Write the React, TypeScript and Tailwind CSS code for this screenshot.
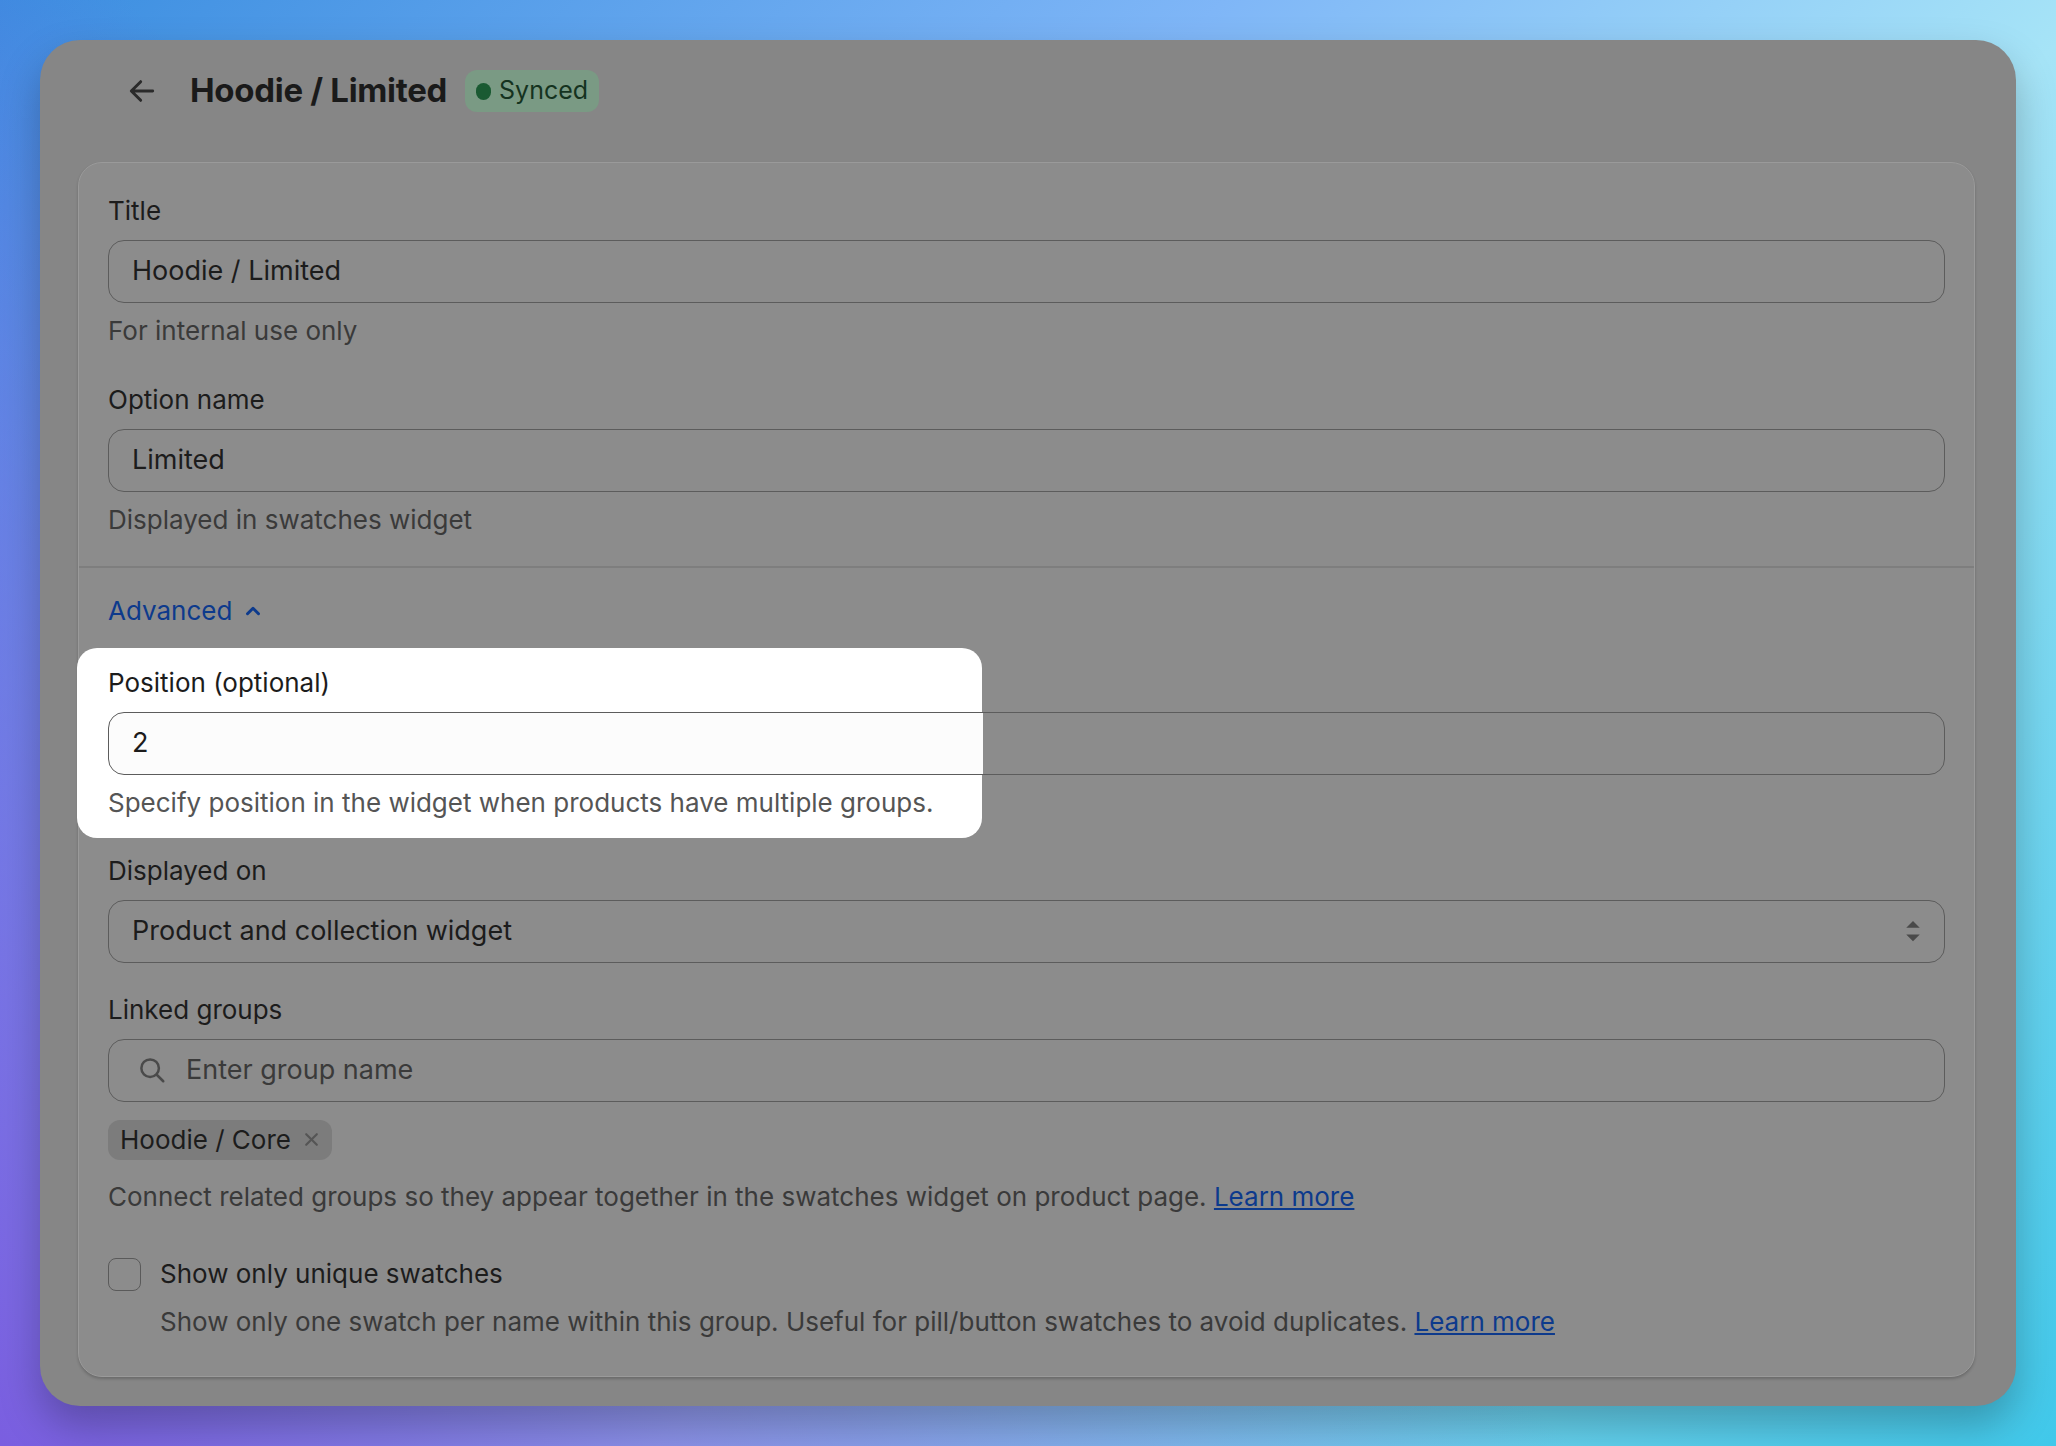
import React from "react";

const F = { fontFamily: "Inter, 'Liberation Sans', sans-serif" };

function Label({ children }: { children: React.ReactNode }) {
  return <div className="text-[26px] leading-[32px] font-normal text-[#1c1c1c]">{children}</div>;
}
function Help({ children, className = "" }: { children: React.ReactNode; className?: string }) {
  return <div className={"text-[26px] leading-[32px] text-[#3a3a3a] " + className}>{children}</div>;
}
function Input({ children, className = "" }: { children: React.ReactNode; className?: string }) {
  return (
    <div className={"mt-[13px] h-[63px] rounded-[16px] border-[1.5px] border-[#5c5c5c] flex items-center px-[23px] text-[27px] text-[#1c1c1c] " + className}>
      {children}
    </div>
  );
}

export default function App() {
  return (
    <div
      className="w-[2056px] h-[1446px] p-[40px] bg-[linear-gradient(135deg,#3b8ee0_0%,#7fb6f7_35%,#a6e4f7_60%,#40c8ea_100%)] relative overflow-hidden"
      style={F}
    >
      <div className="absolute inset-0 bg-[linear-gradient(45deg,#7a5ee0_0%,rgba(122,94,224,0.5)_25%,rgba(0,0,0,0)_45%)]" />
      <div className="relative w-[1976px] h-[1366px] rounded-[40px] bg-[#868686] shadow-[0_20px_40px_rgba(0,0,0,0.25)] pl-[38px] pr-[41px]">
        <div className="h-[122px] flex items-center pb-[20px]">
          <svg width="32" height="32" viewBox="0 0 24 24" className="ml-[48px]" fill="none" stroke="#2a2a2a" strokeWidth="2.2" strokeLinecap="round" strokeLinejoin="round">
            <path d="M20 12H5M11 5l-7 7 7 7" />
          </svg>
          <div className="ml-[32px] text-[33px] font-bold text-[#1a1a1a] tracking-[-0.3px]">Hoodie / Limited</div>
          <div className="ml-[18px] h-[42px] px-[11px] rounded-[12px] bg-[#7a9a84] flex items-center gap-[8px] text-[25px] text-[#15331f]">
            <span className="w-[15px] h-[17px] rounded-full bg-[#1a5a32]" />
            Synced
          </div>
        </div>

        <div className="rounded-[24px] bg-[#8c8c8c] border-[1.5px] border-[#9a9a9a] shadow-[0_2px_3px_rgba(0,0,0,0.2)] h-[1215px]">
          <div className="px-[29px] pt-[32px]">
            <Label>Title</Label>
            <Input>Hoodie / Limited</Input>
            <Help className="mt-[12px]">For internal use only</Help>
            <div className="mt-[37px]"><Label>Option name</Label></div>
            <Input>Limited</Input>
            <Help className="mt-[12px]">Displayed in swatches widget</Help>
          </div>
          <div className="mt-[30px] h-[1.5px] bg-[#7e7e7e]" />
          <div className="px-[29px] pt-[27px]">
            <div className="flex items-center gap-[10px] text-[26px] leading-[32px] text-[#0d3a8c]">
              Advanced
              <svg width="22" height="22" viewBox="0 0 24 24" fill="none" stroke="#0d3a8c" strokeWidth="3.2" strokeLinecap="round" strokeLinejoin="round">
                <path d="M6 15l6-6 6 6" />
              </svg>
            </div>
            <div className="relative mt-[40px]">
              <div className="absolute left-[-31px] top-[-19px] w-[905px] h-[190px] rounded-[20px] bg-white" />
              <div className="relative">
                <Label>Position (optional)</Label>
                <Input className="bg-[linear-gradient(90deg,#fcfcfc_0px,#fcfcfc_874px,transparent_874px)]">2</Input>
                <Help className="mt-[12px] text-[#555555]">Specify position in the widget when products have multiple groups.</Help>
              </div>
            </div>
            <div className="mt-[36px]"><Label>Displayed on</Label></div>
            <Input className="justify-between pr-[22px]">
              <span>Product and collection widget</span>
              <svg width="18" height="28" viewBox="0 0 16 24">
                <path d="M2 9l6-6 6 6z M2 15l6 6 6-6z" fill="#4a4a4a" />
              </svg>
            </Input>
            <div className="mt-[31px]"><Label>Linked groups</Label></div>
            <Input className="gap-[19px] text-[#3a3a3a] pl-[28px]">
              <svg width="30" height="30" viewBox="0 0 24 24" fill="none" stroke="#4a4a4a" strokeWidth="2" strokeLinecap="round">
                <circle cx="10.5" cy="10.5" r="7" />
                <path d="M16 16l5 5" />
              </svg>
              Enter group name
            </Input>
            <div className="mt-[18px] inline-flex items-center gap-[12px] h-[40px] px-[12px] rounded-[12px] bg-[#7c7c7c] text-[26px] text-[#1c1c1c]">
              Hoodie / Core
              <svg width="17" height="17" viewBox="0 0 16 16" stroke="#555" strokeWidth="2" strokeLinecap="round">
                <path d="M3 3l10 10M13 3L3 13" />
              </svg>
            </div>
            <Help className="mt-[21px]">
              Connect related groups so they appear together in the swatches widget on product page.{" "}
              <span className="underline text-[#0d3a8c]">Learn more</span>
            </Help>
            <div className="mt-[45px] flex items-center gap-[19px]">
              <div className="w-[33px] h-[33px] rounded-[8px] border-[1.5px] border-[#5a5a5a]" />
              <div className="text-[26px] leading-[32px] text-[#1c1c1c]">Show only unique swatches</div>
            </div>
            <Help className="mt-[15px] ml-[52px]">
              Show only one swatch per name within this group. Useful for pill/button swatches to avoid duplicates.{" "}
              <span className="underline text-[#0d3a8c]">Learn more</span>
            </Help>
          </div>
        </div>
      </div>
    </div>
  );
}
